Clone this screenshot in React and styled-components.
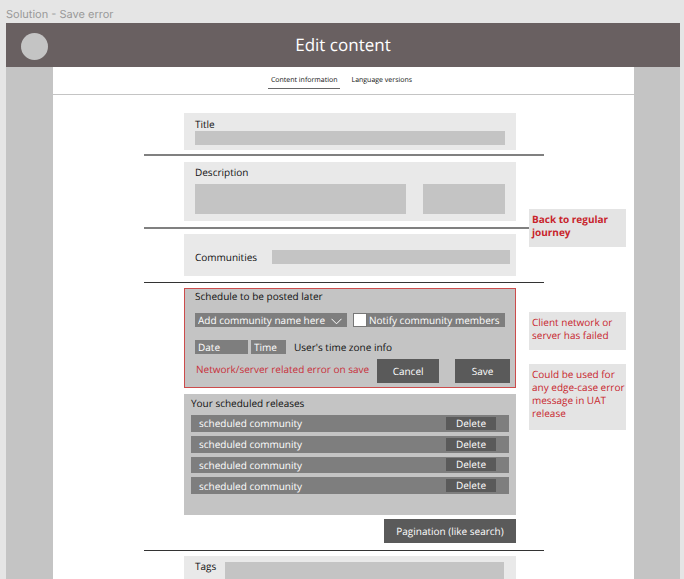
import React from "react";
import styled, { createGlobalStyle } from "styled-components";

const GlobalStyle = createGlobalStyle`
  *, *::before, *::after { box-sizing: border-box; }
  body {
    margin: 0;
    background: #e5e5e5;
    color: #111;
    font-family: "Open Sans", "Noto Sans", sans-serif;
    font-size: 10px;
    line-height: 14px;
    text-rendering: geometricPrecision;
  }
  button, input, select, textarea {
    margin: 0;
    border: 0;
    border-radius: 0;
    font: inherit;
    color: inherit;
    text-rendering: inherit;
  }
`;

const Page = styled.div`
  display: flex;
  flex-direction: column;
  height: 100vh;
  padding: 0 4px 0 6px;
  overflow: hidden;
`;

const FrameName = styled.div`
  padding: 7px 0 2px;
  color: #999;
  font-family: Inter, sans-serif;
  font-size: 11px;
`;

const Header = styled.header`
  display: grid;
  grid-template-columns: 56px 1fr 56px;
  align-items: center;
  flex: none;
  height: 44px;
  background: #696061;
`;

const Avatar = styled.span`
  width: 27px;
  height: 27px;
  margin: 3px 0 0 15px;
  border-radius: 50%;
  background: #c4c4c4;
`;

const Heading = styled.h1`
  margin: 0;
  color: #fff;
  font-size: 17px;
  font-weight: 400;
  line-height: 22px;
  text-align: center;
`;

const Backdrop = styled.div`
  flex: 1;
  min-height: 0;
  padding: 0 46px 0 47px;
  background: #c4c4c4;
`;

const Sheet = styled.main`
  min-height: 100%;
  background: #fff;
`;

const Tabs = styled.nav`
  display: flex;
  justify-content: center;
  align-items: center;
  gap: 8px;
  height: 28px;
  padding-right: 4px;
  border-bottom: 1px solid #c4c4c4;
`;

const Tab = styled.a`
  padding: 3px 3px 2px;
  border-bottom: 1px solid ${(p) => (p.$active ? "#666" : "transparent")};
  color: #111;
  font-size: 7px;
  line-height: 10px;
  text-decoration: none;
`;

const Workspace = styled.div`
  display: grid;
  grid-template-columns: minmax(40px, 131fr) minmax(0, 345fr) 97px;
  padding: 18px 8px 0 0;
`;

const Form = styled.form`
  grid-column: 2;
  min-width: 0;
  margin-right: 13px;
`;

const Divider = styled.hr`
  height: ${(p) => (p.$strong ? 1 : 2)}px;
  margin: ${(p) => p.$space} -28px ${(p) => p.$after} -40px;
  border: 0;
  background: ${(p) => (p.$strong ? "#333" : "#808080")};
`;

const Panel = styled.section`
  display: ${(p) => (p.$inline ? "flex" : "block")};
  align-items: ${(p) => p.$align || "center"};
  gap: ${(p) => p.$gap || "0"};
  min-height: ${(p) => p.$height};
  padding: ${(p) => p.$pad};
  background: #e9e9e9;
`;

const Label = styled.label`
  display: block;
  flex: none;
`;

const Field = styled.input`
  display: block;
  flex: 1;
  width: 100%;
  min-width: 0;
  height: 14px;
  background: #c4c4c4;
`;

const DescriptionRow = styled.div`
  display: grid;
  grid-template-columns: 211fr 82fr;
  gap: 17px;
  margin-top: 5px;
`;

const Area = styled.textarea`
  display: block;
  width: 100%;
  height: 30px;
  min-width: 0;
  resize: none;
  background: #c4c4c4;
`;

const TagsArea = styled(Area)`
  margin-top: 3px;
`;

const Schedule = styled.section`
  padding: 0 6px 4px 10px;
  border: 1px solid #cc4c4c;
  background: #c4c4c4;
`;

const SectionTitle = styled.h2`
  margin: 0;
  font-size: 10px;
  font-weight: 400;
`;

const OptionRow = styled.div`
  display: grid;
  grid-template-columns: 1fr 1fr;
  gap: 6px;
  margin: 10px 4px 13px 0;
`;

const Picker = styled.div`
  display: grid;
  align-items: center;
  background: #7e7e7e;
  color: #fff;
`;

const Select = styled.select`
  grid-area: 1 / 1;
  width: 100%;
  height: 14px;
  padding: 0 20px 0 3px;
  appearance: none;
  background: transparent;
`;

const Chevron = styled.svg`
  grid-area: 1 / 1;
  justify-self: end;
  width: 11px;
  height: 7px;
  margin: 2px 5px 0 0;
  pointer-events: none;
`;

const CheckLabel = styled.label`
  display: flex;
  align-items: center;
  gap: 2px;
  height: 14px;
  background: #7e7e7e;
  color: #fff;
  white-space: nowrap;
`;

const Check = styled.input`
  width: 14px;
  height: 14px;
  appearance: none;
  border: 1px solid #777;
  background: #fff;
  &:checked { background: #5a5a5a; }
`;

const TimeRow = styled.div`
  display: flex;
  gap: 3px;
  align-items: center;
`;

const TimeField = styled.input`
  width: ${(p) => p.$width};
  height: 14px;
  padding: 0 3px;
  background: #7e7e7e;
  &::placeholder { color: #fff; opacity: 1; }
`;

const Zone = styled.span`
  margin-left: 5px;
`;

const ActionRow = styled.div`
  display: flex;
  align-items: center;
  gap: 16px;
  margin-top: 5px;
`;

const ErrorText = styled.p`
  flex: 1;
  margin: 0 -8px 5px 1px;
  color: #c8303a;
  white-space: nowrap;
`;

const Button = styled.button`
  flex: none;
  width: ${(p) => p.$width};
  height: ${(p) => (p.$small ? 13 : 24)}px;
  padding: 0;
  background: #5a5a5a;
  color: #fff;
  line-height: ${(p) => (p.$small ? 13 : 24)}px;
`;

const Releases = styled.section`
  min-height: 121px;
  margin-top: 6px;
  padding: 2px 7px 0;
  background: #c4c4c4;
`;

const ReleaseList = styled.ul`
  display: grid;
  grid-template-rows: repeat(4, 1fr);
  gap: 4px;
  height: 79px;
  margin: 5px 0 0;
  padding: 0;
  list-style: none;
`;

const Release = styled.li`
  display: flex;
  justify-content: space-between;
  align-items: center;
  padding: 0 13px 0 8px;
  background: #7e7e7e;
  color: #fff;
`;

const Pager = styled.div`
  display: flex;
  justify-content: flex-end;
  margin-top: 4px;
`;

const Notes = styled.aside`
  z-index: 1;
  padding-top: 96px;
`;

const Note = styled.p`
  min-height: ${(p) => p.$height || "38px"};
  margin: 0 0 ${(p) => p.$after || "0"};
  padding: 4px 0 8px 3px;
  background: #e4e4e4;
  color: #c8242c;
  font-weight: ${(p) => (p.$bold ? 700 : 400)};
  line-height: 13px;
`;

const releases = [1, 2, 3, 4];

export default function App() {
  return (
    <>
      <GlobalStyle />
      <Page>
        <FrameName>Solution - Save error</FrameName>
        <Header>
          <Avatar />
          <Heading>Edit content</Heading>
        </Header>
        <Backdrop>
          <Sheet>
            <Tabs>
              <Tab href="#content" $active>Content information</Tab>
              <Tab href="#languages">Language versions</Tab>
            </Tabs>
            <Workspace>
              <Form onSubmit={(e) => e.preventDefault()}>
                <Panel $pad="4px 11px 5px">
                  <Label htmlFor="title">Title</Label>
                  <Field id="title" />
                </Panel>
                <Divider $space="4px" $after="6px" />
                <Panel $pad="3px 11px 7px">
                  <Label htmlFor="description">Description</Label>
                  <DescriptionRow>
                    <Area id="description" />
                    <Area aria-label="Description details" />
                  </DescriptionRow>
                </Panel>
                <Divider $space="6px" $after="5px" />
                <Panel $inline $gap="15px" $height="42px" $pad="3px 6px 0 11px">
                  <Label htmlFor="communities">Communities</Label>
                  <Field id="communities" />
                </Panel>
                <Divider $strong $space="6px" $after="5px" />
                <Schedule>
                  <SectionTitle>Schedule to be posted later</SectionTitle>
                  <OptionRow>
                    <Picker>
                      <Select aria-label="Community">
                        <option>Add community name here</option>
                      </Select>
                      <Chevron viewBox="0 0 11 7" fill="none" stroke="#fff" aria-hidden="true">
                        <path d="M.5.8 5.5 5.8 10.5.8" />
                      </Chevron>
                    </Picker>
                    <CheckLabel>
                      <Check type="checkbox" />
                      Notify community members
                    </CheckLabel>
                  </OptionRow>
                  <TimeRow>
                    <TimeField aria-label="Date" placeholder="Date" $width="53px" />
                    <TimeField aria-label="Time" placeholder="Time" $width="35px" />
                    <Zone>User's time zone info</Zone>
                  </TimeRow>
                  <ActionRow>
                    <ErrorText role="alert">Network/server related error on save</ErrorText>
                    <Button type="button" $width="62px">Cancel</Button>
                    <Button type="submit" $width="55px">Save</Button>
                  </ActionRow>
                </Schedule>
                <Releases>
                  <SectionTitle>Your scheduled releases</SectionTitle>
                  <ReleaseList>
                    {releases.map((id) => (
                      <Release key={id}>
                        scheduled community
                        <Button type="button" $small $width="50px">Delete</Button>
                      </Release>
                    ))}
                  </ReleaseList>
                </Releases>
                <Pager>
                  <Button type="button" $width="132px">Pagination (like search)</Button>
                </Pager>
                <Divider $strong $space="7px" $after="5px" />
                <Panel $inline $align="flex-start" $gap="9px" $pad="3px 12px 6px 11px">
                  <Label htmlFor="tags">Tags</Label>
                  <TagsArea id="tags" />
                </Panel>
              </Form>
              <Notes>
                <Note $bold $after="65px">Back to regular journey</Note>
                <Note $after="14px">Client network or server has failed</Note>
                <Note $height="66px">Could be used for any edge-case error message in UAT release</Note>
              </Notes>
            </Workspace>
          </Sheet>
        </Backdrop>
      </Page>
    </>
  );
}
